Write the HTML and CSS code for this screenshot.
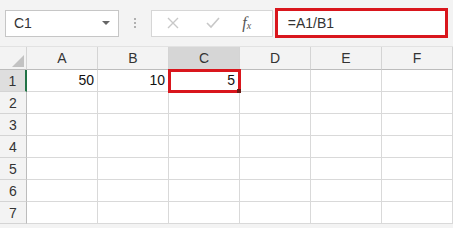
FILE: index.html
```html
<!DOCTYPE html>
<html lang="en">
<head>
    <meta charset="UTF-8">
    <title>Sheet</title>
    <link rel="stylesheet" href="styles.css">
</head>
<body>
    <!-- formula bar -->
    <div class="toolbar">
        <div class="namebox">
            <span>C1</span>
            <span class="arrow"></span>
        </div>
        <div class="grip"><i></i><i></i><i></i></div>
        <div class="fxbox">
            <svg class="ico" width="14" height="14" viewBox="0 0 14 14">
                <path d="M2 2 L12 12 M12 2 L2 12" stroke="#c8c8c8" stroke-width="1.4" fill="none"/>
            </svg>
            <svg class="ico" width="16" height="14" viewBox="0 0 16 14">
                <path d="M2 7 L6 11 L14 2" stroke="#c8c8c8" stroke-width="1.6" fill="none"/>
            </svg>
            <span class="fx">f<sub>x</sub></span>
        </div>
        <div class="formula">=A1/B1</div>
    </div>

    <!-- sheet -->
    <div class="sheet">
        <div class="corner"><span class="tri"></span></div>
        <div class="colhead">A</div>
        <div class="colhead">B</div>
        <div class="colhead sel">C</div>
        <div class="colhead">D</div>
        <div class="colhead">E</div>
        <div class="colhead">F</div>

        <div class="rowhead sel">1</div>
        <div class="cell">50</div>
        <div class="cell">10</div>
        <div class="cell active">5<span class="handle"></span></div>
        <div class="cell"></div>
        <div class="cell"></div>
        <div class="cell"></div>

        <div class="rowhead">2</div>
        <div class="cell"></div><div class="cell"></div><div class="cell"></div><div class="cell"></div><div class="cell"></div><div class="cell"></div>
        <div class="rowhead">3</div>
        <div class="cell"></div><div class="cell"></div><div class="cell"></div><div class="cell"></div><div class="cell"></div><div class="cell"></div>
        <div class="rowhead">4</div>
        <div class="cell"></div><div class="cell"></div><div class="cell"></div><div class="cell"></div><div class="cell"></div><div class="cell"></div>
        <div class="rowhead">5</div>
        <div class="cell"></div><div class="cell"></div><div class="cell"></div><div class="cell"></div><div class="cell"></div><div class="cell"></div>
        <div class="rowhead">6</div>
        <div class="cell"></div><div class="cell"></div><div class="cell"></div><div class="cell"></div><div class="cell"></div><div class="cell"></div>
        <div class="rowhead">7</div>
        <div class="cell"></div><div class="cell"></div><div class="cell"></div><div class="cell"></div><div class="cell"></div><div class="cell"></div>
    </div>
</body>
</html>
```

FILE: styles.css
```css
* {
    margin: 0;
    padding: 0;
    box-sizing: border-box;
}

body {
    background: #f3f3f3;
    font-family: "Liberation Sans", Arial, sans-serif;
    color: #222;
    width: 453px;
    height: 228px;
    overflow: hidden;
}

/* formula bar */
.toolbar {
    height: 47px;
    display: flex;
    align-items: center;
    padding: 0 5px 0 5px;
    border-bottom: 1px solid #e2e2e2;
}

.namebox {
    width: 114px;
    height: 27px;
    background: #fff;
    border: 1px solid #c6c6c6;
    display: flex;
    align-items: center;
    justify-content: space-between;
    padding: 0 8px 0 8px;
    font-size: 14px;
    color: #333;
}

.arrow {
    width: 0;
    height: 0;
    border-left: 4px solid transparent;
    border-right: 4px solid transparent;
    border-top: 4px solid #666;
}

.grip {
    width: 33px;
    display: flex;
    flex-direction: column;
    align-items: center;
    gap: 2px;
}

.grip i {
    width: 2px;
    height: 2px;
    background: #b0b0b0;
}

.fxbox {
    width: 122px;
    height: 27px;
    background: #fff;
    border: 1px solid #d6d6d6;
    display: flex;
    align-items: center;
    padding-left: 14px;
    gap: 25px;
}

.fx {
    font-family: "Liberation Serif", serif;
    font-style: italic;
    font-size: 16px;
    color: #555;
    margin-left: -4px;
}

.fx sub {
    font-size: 10px;
    vertical-align: -1px;
}

.formula {
    margin-left: 2px;
    width: 174px;
    height: 30px;
    background: #fff;
    border: 3px solid #d9161d;
    font-size: 14px;
    color: #333;
    display: flex;
    align-items: center;
    padding-left: 10px;
}

/* grid */
.sheet {
    display: grid;
    grid-template-columns: 27px repeat(6, 71px);
    grid-template-rows: 23px repeat(7, 22px);
    background: #fff;
}

.corner {
    background: #f3f3f3;
    border-right: 1px solid #d4d4d4;
    border-bottom: 1px solid #bcbcbc;
    position: relative;
}

.tri {
    position: absolute;
    right: 2px;
    bottom: 2px;
    width: 0;
    height: 0;
    border-left: 12px solid transparent;
    border-bottom: 12px solid #c2c2c2;
}

.colhead {
    background: #f3f3f3;
    border-right: 1px solid #d4d4d4;
    border-bottom: 1px solid #bcbcbc;
    display: flex;
    align-items: center;
    justify-content: center;
    font-size: 14px;
    color: #333;
}

.colhead.sel {
    background: #d6d6d6;
}

.rowhead {
    background: #f3f3f3;
    border-right: 1px solid #bcbcbc;
    border-bottom: 1px solid #d4d4d4;
    display: flex;
    align-items: center;
    justify-content: center;
    font-size: 14px;
    color: #333;
}

.rowhead.sel {
    background: #dedede;
    border-right: 2px solid #217346;
}

.cell {
    border-right: 1px solid #d9d9d9;
    border-bottom: 1px solid #d9d9d9;
    text-align: right;
    font-size: 14px;
    line-height: 21px;
    padding-right: 3px;
    color: #111;
}

.cell.active {
    position: relative;
    outline: 3px solid #d9161d;
    outline-offset: -2px;
    padding-right: 4px;
}

.handle {
    position: absolute;
    right: -2px;
    bottom: -2px;
    width: 4px;
    height: 4px;
    background: #6b1b14;
}
```
